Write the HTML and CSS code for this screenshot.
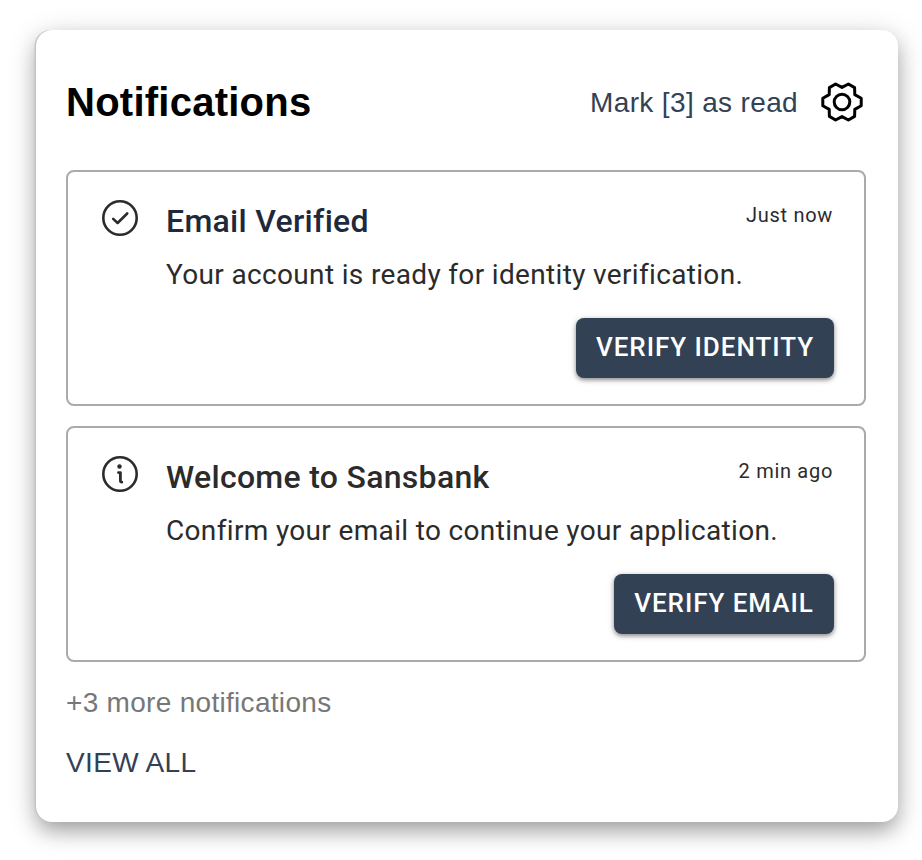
FILE: index.html
```html
<!DOCTYPE html>
<html lang="en">
<head>
  <meta charset="UTF-8">
  <meta name="viewport" content="width=device-width, initial-scale=1.0">
  <title>Notifications</title>
  <link rel="stylesheet" href="styles.css">
</head>
<body>
  <div class="panel">
    <header>
      <h1>Notifications</h1>
      <a class="mark-read">Mark [3] as read</a>
      <svg class="settings" width="44" height="44" viewBox="0 0 44 44" fill="none" stroke="#000" stroke-width="3" stroke-linejoin="round">
        <path d="M22 7.4 L28.4 4 L34.6 7.6 L34.8 14.6 L41.2 18.2 V25.8 L34.8 29.4 L34.6 36.4 L28.4 40 L22 36.6 L15.6 40 L9.4 36.4 L9.2 29.4 L2.8 25.8 V18.2 L9.2 14.6 L9.4 7.6 L15.6 4 Z"/>
        <circle cx="22" cy="22" r="7.8"/>
      </svg>
    </header>

    <div class="notification">
      <svg class="icon" width="40" height="40" viewBox="0 0 40 40" fill="none" stroke="#2b2b2b" stroke-width="2.6" stroke-linecap="round" stroke-linejoin="round">
        <circle cx="20" cy="20" r="16.7"/>
        <path d="M13.2 20.9 L17.6 25 L27.2 15.5"/>
      </svg>
      <div class="content">
        <div class="top">
          <h2 class="verified">Email Verified</h2>
          <span class="time">Just now</span>
        </div>
        <p>Your account is ready for identity verification.</p>
        <button class="btn btn-identity">VERIFY IDENTITY</button>
      </div>
    </div>

    <div class="notification">
      <svg class="icon" width="40" height="40" viewBox="0 0 40 40" fill="none" stroke="#2b2b2b" stroke-width="2.8" stroke-linecap="round" stroke-linejoin="round">
        <circle cx="20" cy="20" r="16.7" stroke-width="2.6"/>
        <circle cx="19.5" cy="12.5" r="2.2" fill="#2b2b2b" stroke="none"/>
        <path d="M18.5 18.6 H20.4 V26.6 Q20.4 28.2 21.8 28.2"/>
      </svg>
      <div class="content">
        <div class="top">
          <h2>Welcome to Sansbank</h2>
          <span class="time">2 min ago</span>
        </div>
        <p>Confirm your email to continue your application.</p>
        <button class="btn btn-email">VERIFY EMAIL</button>
      </div>
    </div>

    <div class="more">+3 more notifications</div>
    <a class="view-all">VIEW ALL</a>
  </div>
</body>
</html>
```
FILE: styles.css
```css
:root {
  --primary: #334155;
  --text-color: #2b2b2b;
  --border-color: #aaa;
}

* {
  box-sizing: border-box;
}

body {
  font-family: "Liberation Sans", Arial, sans-serif;
  background: #fff;
  margin: 0;
  padding: 30px 24px 38px 36px;
}

.panel {
  height: 792px;
  padding: 44px 32px 0 30px;
  background: #fff;
  border-radius: 16px;
  box-shadow: -1.5px 0 0 #c4c4c4, 0 10px 20px -2px rgba(0, 0, 0, 0.28), 0 6px 30px rgba(0, 0, 0, 0.18);
}

header {
  display: flex;
  align-items: center;
  height: 56px;
  margin-bottom: 40px;
  padding-right: 2px;
}

h1 {
  flex: 1;
  margin: 0;
  font-size: 40px;
  line-height: 56px;
  letter-spacing: 0.25px;
  color: #000;
}

.mark-read {
  padding-top: 2px;
  font-size: 28px;
  letter-spacing: 0.35px;
  color: var(--primary);
}

.settings {
  margin-left: 22px;
}

.notification {
  display: flex;
  height: 236px;
  margin-bottom: 20px;
  padding: 26px 30px 0 32px;
  border: 2px solid var(--border-color);
  border-radius: 8px;
  font-family: Roboto, sans-serif;
  color: var(--text-color);
}

.icon {
  flex: none;
  margin-right: 26px;
}

.content {
  flex: 1;
  display: flex;
  flex-direction: column;
}

.top {
  display: flex;
  justify-content: space-between;
}

h2 {
  margin: 1px 0;
  font-size: 32px;
  font-weight: 500;
  line-height: 44px;
  letter-spacing: 0.3px;
}

h2.verified {
  color: #1e293b;
}

.time {
  padding-right: 1px;
  font-size: 20px;
  line-height: 34px;
  letter-spacing: 0.7px;
}

.notification p {
  margin: 11px 0 23px;
  font-size: 28px;
  line-height: 40px;
  letter-spacing: 0.34px;
  white-space: nowrap;
}

.btn {
  align-self: flex-end;
  height: 60px;
  padding: 0 0 2px;
  border: none;
  border-radius: 8px;
  background: var(--primary);
  color: #fff;
  font-family: Roboto, sans-serif;
  font-size: 26px;
  font-weight: 500;
  letter-spacing: 0.95px;
  box-shadow: 0 2px 4px rgba(0, 0, 0, 0.4), 0 1px 8px rgba(0, 0, 0, 0.12);
}

.btn-identity {
  width: 258px;
}

.btn-email {
  width: 220px;
}

.more {
  margin-top: 24px;
  font-size: 28px;
  line-height: 34px;
  letter-spacing: 0.3px;
  color: #777;
}

.view-all {
  display: block;
  margin-top: 26px;
  font-size: 28px;
  line-height: 34px;
  letter-spacing: 0.35px;
  color: var(--primary);
}
```
